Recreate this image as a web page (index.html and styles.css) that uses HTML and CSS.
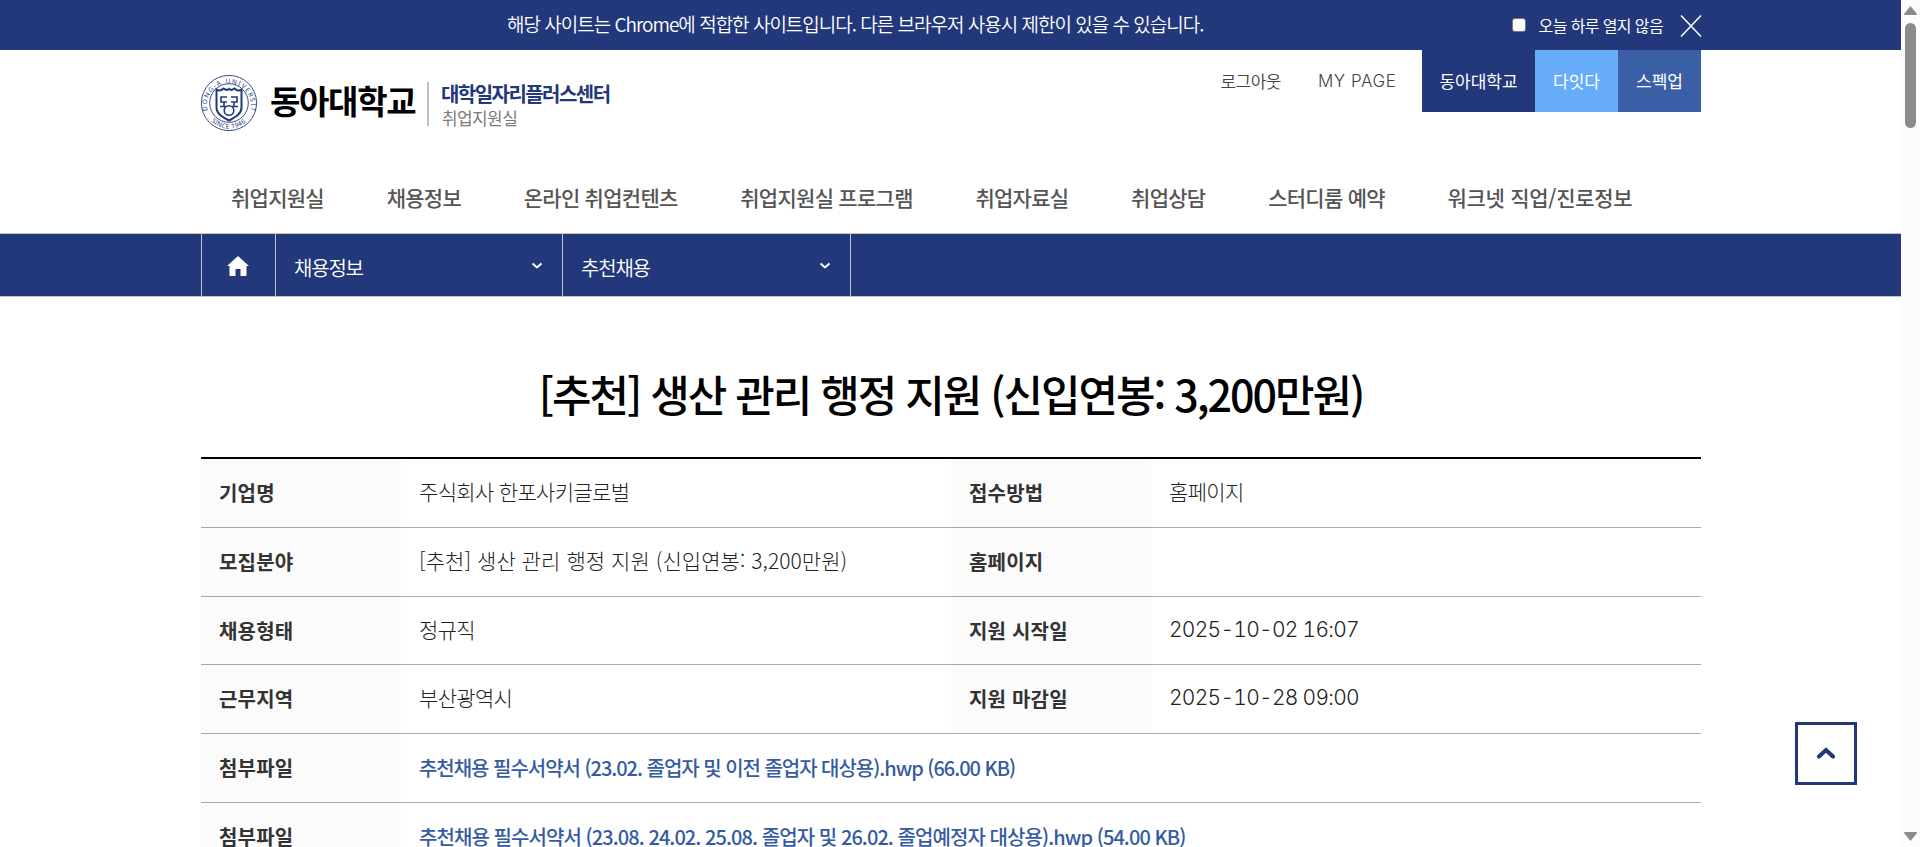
FILE: index.html
```html
<!DOCTYPE html>
<html lang="ko">
<head>
<meta charset="utf-8">
<title>대학일자리플러스센터</title>
<link rel="stylesheet" href="styles.css">
</head>
<body>
<div class="page">
  <div class="notice">
    <span class="notice-text">해당 사이트는 Chrome에 적합한 사이트입니다. 다른 브라우저 사용시 제한이 있을 수 있습니다.</span>
    <div class="notice-close">
      <span class="box"></span>
      <span class="today">오늘 하루 열지 않음</span>
      <svg class="x" viewBox="0 0 22 22"><path d="M1 0.5 21 21.5M21 0.5 1 21.5"/></svg>
    </div>
  </div>
  <header class="header">
    <div class="top">
      <div class="logo">
        <svg class="seal" viewBox="0 0 58 58">
          <defs>
            <path id="arc-top" d="M6.6 36.5A22 22 0 1 1 49.4 36.5"/>
            <path id="arc-bottom" d="M7 43.5A25.4 25.4 0 0 0 49 43.5"/>
          </defs>
          <circle cx="28" cy="29" r="27.6"/><circle cx="28" cy="29" r="19.3"/>
          <text><textPath href="#arc-top" textLength="84">DONG-A UNIVERSITY</textPath></text>
          <text><textPath href="#arc-bottom" startOffset="5" textLength="38">SINCE 1946</textPath></text>
          <path class="shield" d="M15.500 15.500c3 2 5 1 7-1 2 1.500 4 2 5.500 .3 1.500 1.700 3.500 1.200 5.500-.3 2 2 4 3 7 1v18c0 6-5 9-12.500 13-7.500-4-12.500-7-12.500-13z"/>
          <path class="mark" d="M26 23h-6v5h6M23 28v4M19 32.500h6M30 23h6v5h-6M33 28v4M31 32.500h6"/><circle class="mark" cx="28" cy="36.500" r="4.800"/>
        </svg>
        <span class="univ">동아대학교</span>
        <span class="bar"></span>
        <div class="center">
          <span class="c1">대학일자리플러스센터</span>
          <span class="c2">취업지원실</span>
        </div>
      </div>
      <div class="util">
        <span class="logout">로그아웃</span>
        <span class="mypage">MY PAGE</span>
        <span class="link l1">동아대학교</span>
        <span class="link l2">다잇다</span>
        <span class="link l3">스펙업</span>
      </div>
    </div>
    <nav class="nav">
      <span>취업지원실</span>
      <span>채용정보</span>
      <span>온라인 취업컨텐츠</span>
      <span>취업지원실 프로그램</span>
      <span>취업자료실</span>
      <span>취업상담</span>
      <span>스터디룸 예약</span>
      <span class="wide">워크넷 직업/진로정보</span>
    </nav>
  </header>
  <div class="crumbs">
    <div class="crumb-row">
      <div class="home"><svg viewBox="0 0 22 20"><path d="M11 0 22 10H19.500V19Q19.500 20 18.500 20H13.500V13H8.500V20H3.500Q2.500 20 2.500 19V10H0z"/></svg></div>
      <div class="crumb"><span>채용정보</span><svg viewBox="0 0 12 8"><path d="M1.500 1.500 6 5.500 10.500 1.500"/></svg></div>
      <div class="crumb"><span>추천채용</span><svg viewBox="0 0 12 8"><path d="M1.500 1.500 6 5.500 10.500 1.500"/></svg></div>
    </div>
  </div>
  <main class="main">
    <h1>[추천] 생산 관리 행정 지원 (신입연봉: 3,200만원)</h1>
    <div class="table">
      <div class="row"><div class="th">기업명</div><div class="td">주식회사 한포사키글로벌</div><div class="th">접수방법</div><div class="td">홈페이지</div></div>
      <div class="row"><div class="th">모집분야</div><div class="td subject">[추천] 생산 관리 행정 지원 (신입연봉: 3,200만원)</div><div class="th">홈페이지</div><div class="td"></div></div>
      <div class="row"><div class="th">채용형태</div><div class="td">정규직</div><div class="th">지원 시작일</div><div class="td date">2025-10-02 16:07</div></div>
      <div class="row"><div class="th">근무지역</div><div class="td">부산광역시</div><div class="th">지원 마감일</div><div class="td date">2025-10-28 09:00</div></div>
      <div class="row"><div class="th">첨부파일</div><div class="td file">추천채용 필수서약서 (23.02. 졸업자 및 이전 졸업자 대상용).hwp (66.00 KB)</div></div>
      <div class="row"><div class="th">첨부파일</div><div class="td file long">추천채용 필수서약서 (23.08. 24.02. 25.08. 졸업자 및 26.02. 졸업예정자 대상용).hwp (54.00 KB)</div></div>
    </div>
  </main>
</div>
<div class="scroll"><i class="up"></i><i class="thumb"></i><i class="down"></i></div>
<a class="to-top"><svg viewBox="0 0 20 14"><path d="M3 10.500 10 4 17 10.500"/></svg></a>
</body>
</html>
```
FILE: styles.css
```css
* { box-sizing: border-box; margin: 0; padding: 0; }
html, body { height: 847px; overflow: hidden; }
body { display: flex; background: #fff; color: #333; font-family: "Noto Sans CJK KR", sans-serif; font-size: 20px; line-height: 30px; white-space: nowrap; }
svg { display: block; fill: none; overflow: visible; }
.page { width: 1901px; height: 847px; overflow: hidden; }
.notice { height: 50px; background: #23387a; color: #fff; display: flex; align-items: center; padding: 0 199px 0 507px; justify-content: space-between; }
.notice-text { font-size: 19px; font-weight: 350; letter-spacing: -1px; padding-bottom: 2px; }
.notice-close { display: flex; align-items: center; font-size: 16px; font-weight: 400; }
.today { letter-spacing: -0.620px; }
.box { width: 14px; height: 14px; background: #fff; border: 1px solid #767676; border-radius: 3px; margin-right: 13px; }
.x { width: 22px; height: 22px; margin-left: 17px; margin-top: 1px; stroke: #fff; stroke-width: 1.5; }
.header { width: 1500px; height: 183px; margin-left: 201px; }
.top { display: flex; justify-content: space-between; height: 116px; }
.logo { display: flex; align-items: flex-start; padding-top: 24px; }
.seal { width: 58px; height: 58px; stroke: #23387a; stroke-width: .9; }
.seal text { fill: #23387a; stroke: none; font: 400 6.500px "Noto Sans", sans-serif; }
.seal .shield { stroke-width: 2; }
.seal .mark { stroke-width: 1.6; }
.univ { width: 147px; font-size: 33px; font-weight: 700; color: #000; margin-left: 11px; line-height: 53px; letter-spacing: -1.300px; }
.bar { width: 2px; height: 44px; background: #bfbfbf; margin: 8px 12px 0 10px; }
.center { display: flex; flex-direction: column; align-items: flex-start; padding-top: 8px; }
.c1 { font-size: 20px; font-weight: 700; color: #23387a; line-height: 24px; letter-spacing: -1.550px; }
.c2 { font-size: 17px; color: #7b7b7b; line-height: 24px; letter-spacing: -0.600px; padding-left: 1px; }
.util { display: flex; height: 62px; font-size: 17px; font-weight: 350; line-height: 61px; color: #444; }
.logout { margin-right: 37px; letter-spacing: -0.500px; }
.mypage { width: 80px; margin-right: 24px; font-family: Inter, sans-serif; font-weight: 300; letter-spacing: 0.550px; line-height: 62px; }
.link { color: #fff; font-weight: 400; text-align: center; width: 83px; background: #23387a; }
.l1 { width: 113px; }
.l2 { background: #66acf9; }
.l3 { background: #3a5fa7; }
.nav { display: flex; gap: 62.700px; padding-left: 30px; height: 67px; font-size: 21px; line-height: 63px; font-weight: 500; color: #555; letter-spacing: -0.730px; }
.wide { letter-spacing: -0.300px; }
.crumbs { height: 64px; background: #23387a; border-top: 1px solid #c4c4c4; border-bottom: 1px solid #c4c4c4; }
.crumb-row { display: flex; width: 650px; height: 62px; margin-left: 201px; border-left: 1px solid #c4c4c4; }
.home { width: 74px; border-right: 1px solid #c4c4c4; display: flex; align-items: center; justify-content: center; padding-top: 1px; padding-right: 2px; }
.home svg { width: 22px; height: 20px; fill: #fff; }
.crumb { width: 287px; border-right: 1px solid #c4c4c4; display: flex; align-items: center; justify-content: space-between; padding: 2px 19px 0 18px; color: #fff; font-weight: 350; font-size: 20px; letter-spacing: -1.200px; }
.crumb:last-child { width: 288px; }
.crumb span { padding-top: 3px; }
.crumb svg { width: 12px; height: 8px; stroke: #fff; stroke-width: 2; }
.main { width: 1500px; margin-left: 201px; }
h1 { height: 160px; padding-top: 65px; line-height: 62px; text-align: center; font-size: 43px; font-weight: 500; color: #000; letter-spacing: -2.060px; }
.table { border-top: 2px solid #000; }
.row { display: flex; height: 68.800px; border-bottom: 1px solid #aaa; line-height: 67px; }
.th { width: 200px; background: #fbfbfb; padding-left: 18px; font-weight: 700; font-size: 20px; letter-spacing: 0.200px; }
.td { width: 550px; padding-left: 18px; font-weight: 300; font-size: 21px; line-height: 65px; letter-spacing: -0.670px; color: #222; }
.subject { letter-spacing: 0.060px; }
.date { font-family: Inter, sans-serif; font-variant-numeric: tabular-nums; letter-spacing: -0.720px; line-height: 66px; }
.file { width: 1300px; font-weight: 500; font-size: 20px; line-height: 67px; color: #355ba3; letter-spacing: -1.030px; }
.long { letter-spacing: -0.930px; }
.scroll { width: 19px; height: 847px; background: #fcfcfc; display: flex; flex-direction: column; align-items: center; padding: 6px 0; }
.up, .down { width: 13px; height: 9px; background: #8b8b8b; clip-path: polygon(50% 0, 100% 90%, 95% 100%, 5% 100%, 0 90%); }
.down { margin-top: auto; transform: rotate(180deg); }
.thumb { width: 11px; height: 105px; margin-top: 8px; border-radius: 6px; background: #8b8b8b; }
.to-top { position: absolute; left: 1795px; top: 722px; width: 62px; height: 63px; border: 3px solid #23387a; background: #fff; display: flex; align-items: center; justify-content: center; }
.to-top svg { width: 20px; height: 14px; margin-bottom: 2px; stroke: #23387a; stroke-width: 4.200; stroke-linecap: round; }
```
